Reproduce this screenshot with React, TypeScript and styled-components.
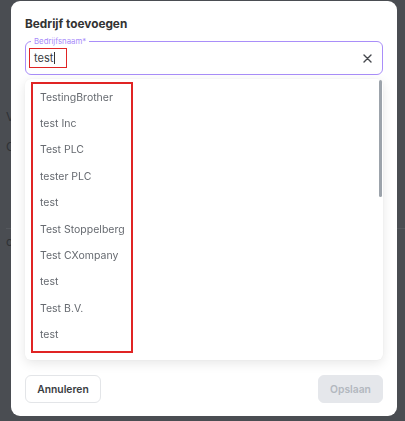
import React from "react";
import styled, { createGlobalStyle } from "styled-components";

const Global = createGlobalStyle`
  html, body { margin: 0; padding: 0; height: 100%; }
  body { background: #4a4d52; font-family: Inter, "Open Sans", Arial, sans-serif; overflow: hidden; }
  #root { height: 100%; }
`;

const Page = styled.div`
  height: 421px;
  display: flex;
  flex-direction: column;
  padding: 110px 0 0 6px;
  gap: 16px;
  box-sizing: border-box;
`;

const GhostText = styled.div`
  color: #2e3135;
  font-size: 12px;
  line-height: 14px;
`;

const GhostRule = styled.div`
  margin-top: 58px;
  border-top: 1px solid #55585d;
  padding-top: 5px;
  color: #2e3135;
  font-size: 12px;
`;

const Overlay = styled.div`
  position: fixed;
  inset: 0;
  padding: 1px 8px 5px 11px;
  box-sizing: border-box;
  display: flex;
`;

const Modal = styled.div`
  flex: 1;
  background: #ffffff;
  border-radius: 9px;
  padding: 15px 14px 13px 14px;
  box-sizing: border-box;
  display: flex;
  flex-direction: column;
`;

const Title = styled.h2`
  margin: 0;
  font-size: 11.8px;
  line-height: 16px;
  font-weight: 700;
  color: #333333;
`;

const Field = styled.div`
  position: relative;
  margin-top: 9px;
  height: 34px;
  border: 1px solid #a98ef9;
  border-radius: 6px;
  box-sizing: border-box;
  display: flex;
  align-items: center;
  padding: 0 8px 0 3px;
`;

const FloatLabel = styled.span`
  position: absolute;
  left: 5px;
  top: -6px;
  padding: 0 3px;
  background: #ffffff;
  color: #a78bfa;
  font-size: 7.8px;
  line-height: 10px;
`;

const Value = styled.span`
  border: 1.5px solid #e02424;
  height: 20px;
  width: 38px;
  box-sizing: border-box;
  display: flex;
  align-items: center;
  padding-left: 4px;
  font-size: 11px;
  color: #3a3d42;
`;

const Caret = styled.span`
  display: inline-block;
  width: 1px;
  height: 12px;
  background: #333;
  margin-left: 1px;
`;

const Spacer = styled.div`
  flex: 1;
`;

const ClearBtn = styled.span`
  display: flex;
  width: 12px;
  height: 12px;
  align-items: center;
  justify-content: center;
  margin-right: 1px;
`;

const Panel = styled.div`
  position: relative;
  margin-top: 4px;
  height: 281px;
  background: #ffffff;
  border-radius: 6px;
  box-shadow: 0 3px 12px rgba(0, 0, 0, 0.1), 0 0 2px rgba(0, 0, 0, 0.06);
  padding: 3px 0 0 6px;
  box-sizing: border-box;
`;

const Thumb = styled.div`
  position: absolute;
  right: 1px;
  top: 1px;
  width: 3px;
  height: 117px;
  background: #9ca3ab;
  border-radius: 2px;
`;

const List = styled.ul`
  margin: 0;
  width: 102px;
  height: 271px;
  border: 2px solid #e02424;
  box-sizing: border-box;
  list-style: none;
  padding: 0 0 0 7px;
`;

const Item = styled.li`
  height: 26.4px;
  display: flex;
  align-items: center;
  font-size: 10.5px;
  color: #666a70;
  white-space: nowrap;
`;

const Footer = styled.div`
  margin-top: auto;
  display: flex;
  justify-content: space-between;
`;

const Button = styled.button<{ $primary?: boolean }>`
  height: 28px;
  border-radius: 6px;
  font-family: inherit;
  font-size: 10.3px;
  font-weight: 600;
  box-sizing: border-box;
  padding: 0;
  width: ${(p) => (p.$primary ? "65px" : "76px")};
  border: 1px solid ${(p) => (p.$primary ? "#e5e7eb" : "#e3e5e8")};
  background: ${(p) => (p.$primary ? "#e5e7eb" : "#ffffff")};
  color: ${(p) => (p.$primary ? "#b3b8bf" : "#3a3d42")};
`;

const items = [
  "TestingBrother",
  "test Inc",
  "Test PLC",
  "tester PLC",
  "test",
  "Test Stoppelberg",
  "Test CXompany",
  "test",
  "Test B.V.",
  "test",
];

export default function App() {
  return (
    <>
      <Global />
      <Page>
        <GhostText>V</GhostText>
        <GhostText>C</GhostText>
        <GhostRule>oct</GhostRule>
      </Page>
      <Overlay>
        <Modal>
          <Title>Bedrijf toevoegen</Title>
          <Field>
            <FloatLabel>Bedrijfsnaam*</FloatLabel>
            <Value>
              test
              <Caret />
            </Value>
            <Spacer />
            <ClearBtn>
              <svg width="9" height="9" viewBox="0 0 9 9">
                <path d="M1 1L8 8M8 1L1 8" stroke="#45484d" strokeWidth="1.4" strokeLinecap="round" />
              </svg>
            </ClearBtn>
          </Field>
          <Panel>
            <List>
              {items.map((t, i) => (
                <Item key={i}>{t}</Item>
              ))}
            </List>
            <Thumb />
          </Panel>
          <Footer>
            <Button>Annuleren</Button>
            <Button $primary>Opslaan</Button>
          </Footer>
        </Modal>
      </Overlay>
    </>
  );
}
